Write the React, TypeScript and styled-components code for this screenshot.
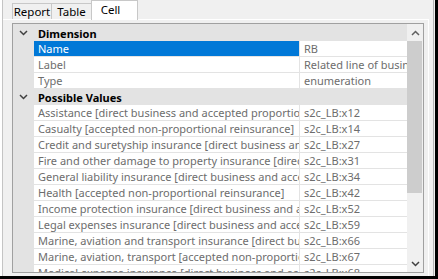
import React from 'react'
import styled, { createGlobalStyle } from 'styled-components'

const GlobalStyle = createGlobalStyle`
  html, body {
    margin: 0;
    padding: 0;
    background: #fff;
  }
  body {
    font-family: 'Noto Sans', 'Open Sans', sans-serif;
    font-size: 11px;
  }
`

const Frame = styled.div`
  width: 438px;
  height: 279px;
  box-sizing: border-box;
  border-right: 3px solid #000;
  border-bottom: 3px solid #000;
  background: #f0f0f0;
  box-shadow: inset 2px 0 0 #fff;
  display: flex;
`

const Page = styled.div`
  flex: 1;
  margin: 0 1px 0 2px;
  border-left: 1px solid #c4c4c4;
  border-right: 1px solid #b4b4b4;
  display: flex;
  flex-direction: column;
  min-width: 0;
`

const TabStrip = styled.div`
  height: 19px;
  padding-left: 9px;
  display: flex;
  align-items: flex-end;
`

const Tab = styled.div<{ $active?: boolean; $width: number }>`
  box-sizing: border-box;
  flex: none;
  width: ${p => p.$width}px;
  height: ${p => (p.$active ? '20px' : '16px')};
  margin-bottom: ${p => (p.$active ? '-1px' : '0')};
  margin-left: -1px;
  padding: ${p => (p.$active ? '0 12px 3px 4px' : '0')};
  border: 1px solid #c8c8c8;
  border-bottom: none;
  background: ${p => (p.$active ? '#fff' : '#f0f0f0')};
  color: #000;
  font-size: 11.5px;
  display: flex;
  align-items: center;
  justify-content: center;
  position: relative;
  z-index: ${p => (p.$active ? 1 : 0)};
  &:first-child {
    margin-left: 0;
  }
`

const TabBody = styled.div`
  flex: 1;
  display: flex;
  margin-right: 4px;
  padding: 3px 4px 3px 9px;
  border-top: 1px solid #fff;
  border-right: 1px solid #fff;
  min-height: 0;
`

const Grid = styled.div`
  flex: 1;
  border: 1px solid #a0a0a0;
  display: flex;
  min-width: 0;
  overflow: hidden;
`

const GridMain = styled.div`
  flex: 1;
  background: #e3e3e3;
  padding-top: 1px;
  overflow: hidden;
`

const CategoryRow = styled.div`
  height: 16px;
  display: flex;
  align-items: center;
  font-weight: bold;
  color: #000;
`

const CategoryTitle = styled.span`
  padding-left: 4px;
`

const Gutter = styled.div`
  width: 21px;
  flex: none;
  height: 100%;
  display: flex;
  align-items: center;
  justify-content: center;
`

const PropRow = styled.div`
  height: 16px;
  display: flex;
`

const Cell = styled.div<{ $selected?: boolean; $width: number }>`
  box-sizing: border-box;
  width: ${p => p.$width}px;
  flex: none;
  height: 16px;
  padding: 0 0 1px 4px;
  border-bottom: 1px solid #e3e3e3;
  background: ${p => (p.$selected ? '#0078d7' : '#fff')};
  color: ${p => (p.$selected ? '#fff' : '#6d6d6d')};
  white-space: nowrap;
  overflow: hidden;
  line-height: 15px;
`

const Divider = styled.div`
  width: 1px;
  flex: none;
  background: #e3e3e3;
`

const ScrollBar = styled.div`
  width: 16px;
  flex: none;
  background: #f0f0f0;
  display: flex;
  flex-direction: column;
`

const ArrowBox = styled.div`
  height: 17px;
  display: flex;
  align-items: center;
  justify-content: center;
  flex: none;
`

const Thumb = styled.div`
  height: 152px;
  margin: 0 1px 0 0;
  background: #cdcdcd;
`

const Track = styled.div`
  flex: 1;
`

const Chevron = ({ up }: { up?: boolean }) => (
  <svg width="9" height="6" viewBox="0 0 9 6">
    <polyline
      points={up ? '1,5 4.5,1.5 8,5' : '1,1 4.5,4.5 8,1'}
      fill="none"
      stroke={up ? '#606060' : '#404040'}
      strokeWidth="1.5"
    />
  </svg>
)

interface IProp {
  label: string
  value: string
  selected?: boolean
}

const dimension: IProp[] = [
  { label: 'Name', value: 'RB', selected: true },
  { label: 'Label', value: 'Related line of business' },
  { label: 'Type', value: 'enumeration' },
]

const possibleValues: IProp[] = [
  { label: 'Assistance [direct business and accepted proportional reinsurance]', value: 's2c_LB:x12' },
  { label: 'Casualty [accepted non-proportional reinsurance]', value: 's2c_LB:x14' },
  { label: 'Credit and suretyship insurance [direct business and accepted proportional reinsurance]', value: 's2c_LB:x27' },
  { label: 'Fire and other damage to property insurance [direct business and accepted proportional reinsurance]', value: 's2c_LB:x31' },
  { label: 'General liability insurance [direct business and accepted proportional reinsurance]', value: 's2c_LB:x34' },
  { label: 'Health [accepted non-proportional reinsurance]', value: 's2c_LB:x42' },
  { label: 'Income protection insurance [direct business and accepted proportional reinsurance]', value: 's2c_LB:x52' },
  { label: 'Legal expenses insurance [direct business and accepted proportional reinsurance]', value: 's2c_LB:x59' },
  { label: 'Marine, aviation and transport insurance [direct business and accepted proportional reinsurance]', value: 's2c_LB:x66' },
  { label: 'Marine, aviation, transport [accepted non-proportional reinsurance]', value: 's2c_LB:x67' },
  { label: 'Medical expense insurance [direct business and accepted proportional reinsurance]', value: 's2c_LB:x68' },
]

const Category : React.FC<{ title: string, items: IProp[] }> = ({ title, items }) => (
  <>
    <CategoryRow>
      <Gutter><Chevron /></Gutter>
      <CategoryTitle>{title}</CategoryTitle>
    </CategoryRow>
    {items.map(item => (
      <PropRow key={item.label}>
        <Gutter />
        <Cell $width={265} $selected={item.selected}>{item.label}</Cell>
        <Divider />
        <Cell $width={107}>{item.value}</Cell>
      </PropRow>
    ))}
  </>
)

const App : React.FC = () => {
  return (
    <Frame>
      <GlobalStyle />
      <Page>
        <TabStrip>
          <Tab $width={40}>Report</Tab>
          <Tab $width={41}>Table</Tab>
          <Tab $width={47} $active>Cell</Tab>
        </TabStrip>
        <TabBody>
          <Grid>
            <GridMain>
              <Category title={'Dimension'} items={dimension} />
              <Category title={'Possible Values'} items={possibleValues} />
            </GridMain>
            <ScrollBar>
              <ArrowBox><Chevron up /></ArrowBox>
              <Thumb />
              <Track />
              <ArrowBox><Chevron /></ArrowBox>
            </ScrollBar>
          </Grid>
        </TabBody>
      </Page>
    </Frame>
  )
}

export default App
